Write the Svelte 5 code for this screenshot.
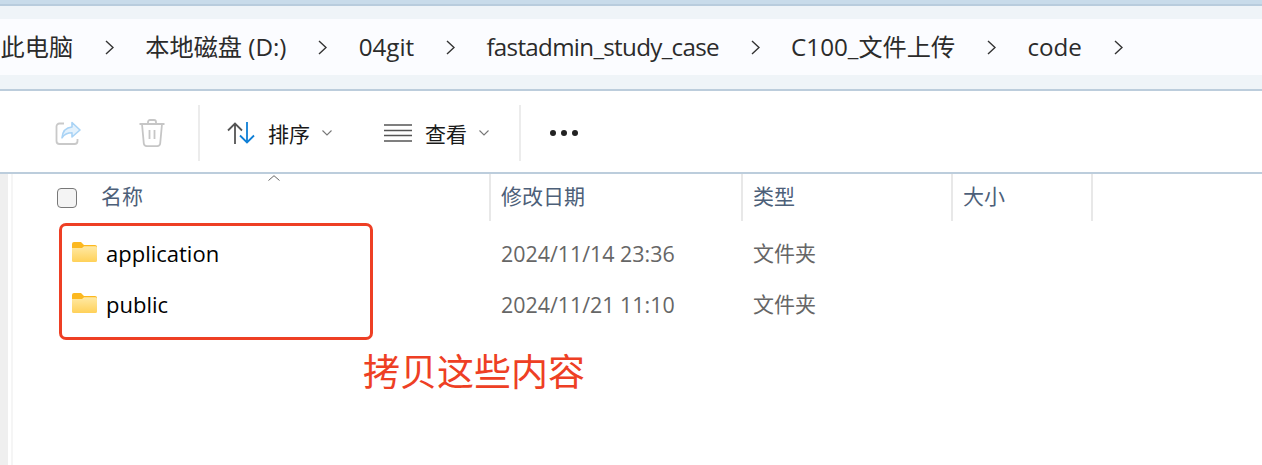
<script>
	const crumbs = ['此电脑', '本地磁盘 (D:)', '04git', 'fastadmin_study_case', 'C100_文件上传', 'code'];
	const columns = [
		{ label: '修改日期', width: 252 },
		{ label: '类型', width: 210 },
		{ label: '大小', width: 140 }
	];
	const rows = [
		{ name: 'application', date: '2024/11/14 23:36', type: '文件夹' },
		{ name: 'public', date: '2024/11/21 11:10', type: '文件夹' }
	];
</script>

<div class="window">
	<div class="top-edge"></div>
	<nav class="address">
		<div class="crumbs">
			{#each crumbs as crumb}
				<span class="crumb" class:long={crumb.length > 15}>{crumb}</span>
				<svg class="crumb-arrow" viewBox="0 0 9 15" width="9" height="15" fill="none" stroke="#333" stroke-width="1.4"><path d="M1 1l7 6.500L1 14" /></svg>
			{/each}
		</div>
	</nav>

	<div class="toolbar">
		<button class="tool share" aria-label="share">
			<svg viewBox="0 0 26 24" width="26" height="24" fill="none">
				<path d="M9 2.500H4.500a3 3 0 0 0-3 3V20a3 3 0 0 0 3 3h15a3 3 0 0 0 3-3v-2" stroke="#c9c9c9" stroke-width="1.800" />
				<path d="M17 1.500l8 7.500-8 7v-4.200c-4.500 0-7.500 1.200-10 5 .5-6 4-10.300 10-10.800z" fill="#e3f1fc" stroke="#a9d3f5" stroke-width="1.600" stroke-linejoin="round" />
			</svg>
		</button>
		<button class="tool trash" aria-label="delete">
			<svg viewBox="0 0 26 28" width="26" height="28" fill="none" stroke="#c6c6c6" stroke-width="1.800">
				<path d="M0.500 5h25M9 5V3a2 2 0 0 1 2-2h4a2 2 0 0 1 2 2v2" />
				<path d="M3 5l1.800 19.500a3 3 0 0 0 3 2.600h10.400a3 3 0 0 0 3-2.600L23 5" />
				<path d="M10.500 11v9M15.500 11v9" />
			</svg>
		</button>
		<span class="divider first"></span>
		<button class="tool labelled sort">
			<svg viewBox="0 0 28 22" width="28" height="22" fill="none" stroke-width="1.800">
				<path d="M8 22V1.500M1 8.500l7-7 7 7" stroke="#555" />
				<path d="M20 0v20.500M13 13.500l7 7 7-7" stroke="#0f7fd6" />
			</svg>
			<span>排序</span>
			<svg class="caret" viewBox="0 0 10 6" width="10" height="6" fill="none" stroke="#777" stroke-width="1.100"><path d="M0.500 0.500L5 5l4.500-4.500" /></svg>
		</button>
		<button class="tool labelled view">
			<svg viewBox="0 0 28 18" width="28" height="18" fill="none" stroke="#555" stroke-width="1.600">
				<path d="M0 1h28M0 6.500h28M0 11.500h28M0 17h28" />
			</svg>
			<span>查看</span>
			<svg class="caret" viewBox="0 0 10 6" width="10" height="6" fill="none" stroke="#777" stroke-width="1.100"><path d="M0.500 0.500L5 5l4.500-4.500" /></svg>
		</button>
		<span class="divider second"></span>
		<button class="tool more" aria-label="more">
			<i></i><i></i><i></i>
		</button>
	</div>

	<div class="listing">
		<div class="gutter"></div>
		<div class="table">
			<div class="head">
				<div class="name-col">
					<span class="checkbox"></span>
					<span class="name-label">名称</span>
					<svg class="sort-caret" viewBox="0 0 12 6" width="12" height="6" fill="none" stroke="#666" stroke-width="1"><path d="M0.500 5.500L6 0.700l5.500 4.800" /></svg>
				</div>
				{#each columns as col}
					<div class="head-cell" style="width: {col.width}px">{col.label}</div>
				{/each}
			</div>
			{#each rows as row}
				<div class="row">
					<div class="file">
						<svg viewBox="0 0 25 20" width="25" height="20">
							<defs>
								<linearGradient id="folder-fill" x1="0" y1="0" x2="0" y2="1">
									<stop offset="0" stop-color="#ffe9a4" />
									<stop offset="1" stop-color="#ffd159" />
								</linearGradient>
							</defs>
							<path d="M0 2a2 2 0 0 1 2-2h7l3 3h11a2 2 0 0 1 2 2v3H0z" fill="#fcb81f" />
							<path d="M0 6h10l2-1.700h11.500a1.500 1.500 0 0 1 1.500 1.500V18.500a1.500 1.500 0 0 1-1.500 1.500h-22A1.500 1.500 0 0 1 0 18.500z" fill="url(#folder-fill)" />
						</svg>
						<span class="file-name">{row.name}</span>
					</div>
					<div class="cell date">{row.date}</div>
					<div class="cell kind">{row.type}</div>
				</div>
			{/each}
		</div>
	</div>

	<div class="mark-box"></div>
	<div class="mark-text">拷贝这些内容</div>
</div>

<style>
	:global(body) {
		margin: 0;
		background: #fff;
	}

	.window {
		position: relative;
		width: 1262px;
		height: 465px;
		overflow: hidden;
		background: #fff;
		font-family: "Open Sans", "Noto Sans CJK SC", sans-serif;
		color: #1a1a1a;
	}

	.top-edge {
		height: 4px;
		background: #c8dbea;
		border-bottom: 2px solid #b8ccdd;
	}

	.address {
		padding: 13px 0 14px;
		background: #eff4f8;
		border-bottom: 2px solid #bccddc;
	}

	.crumbs {
		height: 56px;
		display: flex;
		align-items: center;
		gap: 31.6px;
		padding-left: 0.5px;
		background: #fbfcff;
		white-space: nowrap;
		font-size: 24.2px;
		color: #2b2b2b;
	}

	.crumb {
		line-height: 56px;
		margin-top: -1px;
	}

	.crumb.long {
		letter-spacing: -0.7px;
	}

	.crumb-arrow {
		flex: none;
	}

	.toolbar {
		height: 79px;
		padding-top: 2px;
		display: flex;
		align-items: center;
		font-size: 21px;
		border-bottom: 2px solid #bccddc;
	}

	.tool {
		display: flex;
		align-items: center;
		padding: 0;
		background: none;
		border: 0;
		font: inherit;
		color: inherit;
	}

	.share {
		margin-left: 55px;
	}

	.trash {
		margin-left: 58px;
	}

	.divider {
		width: 2px;
		height: 56px;
		background: #ececec;
	}

	.divider.first {
		margin-left: 33px;
	}

	.divider.second {
		margin-left: 30px;
	}

	.labelled span {
		margin-left: 13px;
	}

	.caret {
		margin-left: 12px;
	}

	.sort {
		margin-left: 27px;
	}

	.view {
		margin-left: 52px;
	}

	.more {
		margin-left: 29px;
		gap: 5px;
	}

	.more i {
		width: 6px;
		height: 6px;
		border-radius: 50%;
		background: #222;
	}

	.listing {
		display: flex;
		height: 291px;
	}

	.gutter {
		flex: none;
		width: 13px;
		background: linear-gradient(to right, #efefef 8px, #fff 8px, #fff 11px, #f5f5f5 11px);
	}

	.table {
		flex: 1;
		padding-left: 44px;
	}

	.head {
		display: flex;
		height: 47px;
		font-size: 21px;
		line-height: 45px;
		color: #4d6079;
	}

	.name-col {
		position: relative;
		width: 432px;
		display: flex;
		align-items: center;
		border-right: 2px solid #e8e8e8;
	}

	.name-label {
		margin: -2px 0 0 24px;
	}

	.checkbox {
		flex: none;
		width: 18px;
		height: 18px;
		border: 1px solid #787878;
		border-radius: 4px;
		background: #f4f4f4;
	}

	.sort-caret {
		position: absolute;
		left: 211px;
		top: 1px;
	}

	.head-cell {
		box-sizing: border-box;
		padding-left: 10px;
		border-right: 2px solid #e8e8e8;
	}

	.row {
		display: flex;
		height: 51px;
		align-items: center;
		font-size: 21.4px;
		color: #666;
	}

	.head + .row {
		margin-top: 7px;
	}

	.file {
		width: 434px;
		display: flex;
		align-items: center;
		font-size: 22px;
		color: #000;
	}

	.file svg {
		margin: -4px 9px 0 15px;
	}

	.file-name {
		margin-top: -2px;
	}

	.cell {
		padding-left: 10px;
	}

	.date {
		width: 242px;
	}

	.kind {
		font-size: 21px;
		margin-top: -4px;
	}

	/* annotation drawn over the listing */
	.mark-box {
		position: absolute;
		left: 59px;
		top: 223px;
		width: 308px;
		height: 111px;
		border: 3px solid #ee3f24;
		border-radius: 7px;
	}

	.mark-text {
		position: absolute;
		left: 363px;
		top: 347px;
		font-size: 37px;
		line-height: 50px;
		color: #ee3f24;
		white-space: nowrap;
	}
</style>
